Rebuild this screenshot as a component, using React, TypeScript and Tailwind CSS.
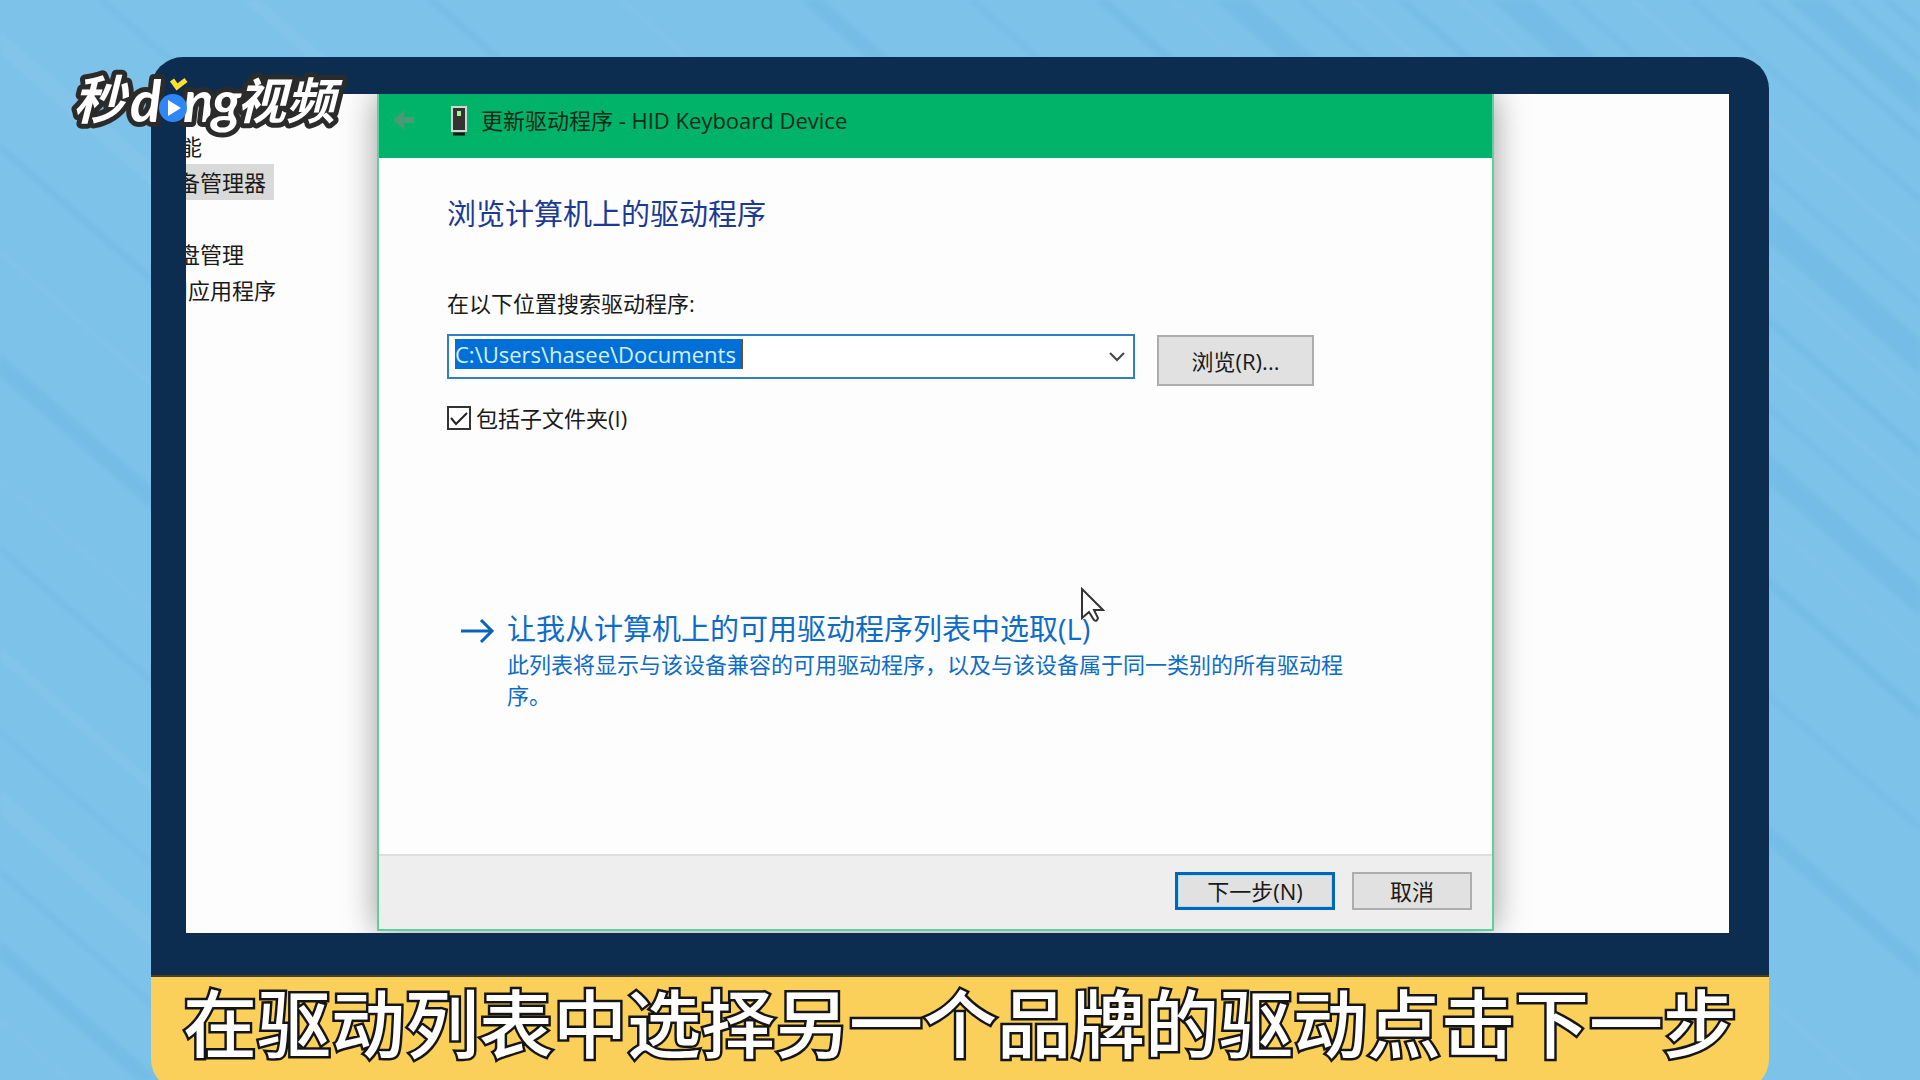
import { useState } from "react";

const UI_FONT = "font-['Open_Sans','Noto_Sans_CJK_SC',sans-serif]";

const BUTTON = "border-2 border-[#adadad] bg-[#e1e1e1] text-[22px] leading-none text-[#1a1a1a]";

const TREE_ITEMS = [
  { label: "性能", shift: "-ml-7", selected: false },
  { label: "设备管理器", shift: "-ml-[30px]", selected: true },
  { label: "", shift: "", selected: false },
  { label: "磁盘管理", shift: "-ml-[30px]", selected: false },
  { label: "和应用程序", shift: "-ml-5", selected: false },
];

// Faint brush streaks in the wallpaper: offset along the top edge, width, colour.
const STREAKS = [
  [-1180, 3, "#fff"], [-1100, 14, "#1a78b0"], [-1010, 4, "#1a78b0"], [-930, 20, "#fff"],
  [-850, 3, "#1a78b0"], [-760, 10, "#fff"], [-640, 4, "#1a78b0"], [-560, 3, "#fff"],
  [-430, 16, "#1a78b0"], [-300, 4, "#fff"], [-180, 5, "#1a78b0"], [-60, 18, "#fff"],
  [90, 4, "#1a78b0"], [240, 12, "#fff"], [420, 5, "#1a78b0"], [610, 4, "#fff"],
  [800, 14, "#1a78b0"], [960, 4, "#1a78b0"], [1090, 8, "#1a78b0"], [1160, 3, "#fff"],
  [1220, 22, "#1a78b0"], [1290, 4, "#1a78b0"], [1340, 5, "#fff"], [1390, 6, "#1a78b0"],
  [1450, 4, "#fff"], [1500, 26, "#1a78b0"], [1560, 4, "#1a78b0"], [1620, 5, "#fff"],
  [1680, 4, "#1a78b0"], [1750, 5, "#1a78b0"], [1795, 24, "#1a78b0"], [1840, 4, "#1a78b0"],
  [1875, 5, "#1a78b0"],
] as const;

function Wallpaper() {
  return (
    <svg
      className="absolute inset-0 h-full w-full blur-[2px]"
      viewBox="0 0 1920 1080"
      preserveAspectRatio="xMidYMid slice"
      aria-hidden="true"
    >
      {STREAKS.map(([x, width, color]) => (
        <path key={x} d={`M${x} -10l1260 1100`} stroke={color} strokeWidth={width} opacity="0.06" />
      ))}
    </svg>
  );
}

function Logo() {
  const glyph = {
    fill: "#fff",
    stroke: "#2b2b2b",
    strokeWidth: 10,
    strokeLinejoin: "round" as const,
    paintOrder: "stroke",
  };
  return (
    <svg
      className="absolute top-[-2px] left-[-88px] h-[90px] w-[300px] font-['Noto_Sans_CJK_SC',sans-serif] font-bold italic"
      viewBox="0 0 300 90"
      role="img"
      aria-label="秒dǒng视频"
    >
      <text x="10" y="64" fontSize="52" {...glyph}>秒</text>
      <text x="174" y="64" fontSize="49" {...glyph}>视频</text>
      <g className="font-['Lato',sans-serif]">
        <text x="67" y="67" fontSize="58" {...glyph}>d</text>
        <text x="120" y="67" fontSize="58" {...glyph}>n</text>
        <text x="149" y="67" fontSize="58" {...glyph}>g</text>
      </g>
      <circle cx="110" cy="53" r="14" fill="#2f86f6" />
      <path d="M105 45v16l13-8z" fill="#fff" />
      <path d="M109 25l5 7 9-7" fill="none" stroke="#ffe02e" strokeWidth="5" />
    </svg>
  );
}

function Sidebar() {
  return (
    <ul className="w-[191px] shrink-0 overflow-hidden pt-[34px] text-[22px] leading-9 text-[#1a1a1a]">
      {TREE_ITEMS.map((item, i) => (
        <li key={i} className="h-9 whitespace-nowrap">
          <span className={`inline-block pr-2 ${item.shift} ${item.selected ? "bg-[#d9d9d9]" : ""}`}>
            {item.label}
          </span>
        </li>
      ))}
    </ul>
  );
}

function TitleBar() {
  return (
    <header className="flex h-16 items-start bg-[#00b368] pt-2 pl-3">
      <button type="button" aria-label="返回" className="flex h-9 w-6 items-center text-[#4a9a75]">
        <svg viewBox="0 0 24 24" className="h-6 w-6">
          <path d="M2 12L13 2v7h10v6H13v7z" fill="currentColor" />
        </svg>
      </button>
      <svg viewBox="0 0 16 30" className="mt-1 ml-9 h-[30px] w-4">
        <rect x="1" y="1" width="14" height="24" fill="#333" stroke="#d0d6d2" strokeWidth="2" />
        <rect x="6" y="5" width="4" height="5" fill="#a8f090" />
        <path d="M2 28h12" stroke="#111" strokeWidth="3" />
      </svg>
      <h1 className="ml-[14px] text-[22px] leading-9 text-[#0c2b1a]">更新驱动程序 - HID Keyboard Device</h1>
    </header>
  );
}

function DriverDialog() {
  const [path, setPath] = useState("C:\\Users\\hasee\\Documents");
  const [subfolders, setSubfolders] = useState(true);

  return (
    <section className="relative mb-[2px] flex flex-1 flex-col border-x-2 border-b-2 border-[#5fcf9f] bg-[#fdfdfd] shadow-[0_0_32px_rgba(0,0,0,0.4)]">
      <TitleBar />
      <div className="flex-1 pr-[140px] pl-[68px]">
        <h2 className="pt-9 text-[29px] leading-10 text-[#1c3a94]">浏览计算机上的驱动程序</h2>

        <label htmlFor="path" className="mt-[53px] block text-[22px] leading-8 text-[#1a1a1a]">
          在以下位置搜索驱动程序:
        </label>
        <div className="mt-[15px] mr-[38px] flex items-start gap-[22px]">
          <div className="relative flex h-[45px] flex-1 items-start border-2 border-[#2f7fc1] bg-white pt-[3px] pl-[6px]">
            <input
              id="path"
              value={path}
              onChange={(e) => setPath(e.target.value)}
              className="h-[30px] w-[288px] border-r-2 border-[#7a4a20] bg-[#0070d8] text-[22px] leading-[30px] text-[#d5f0ff] outline-none"
            />
            <button
              type="button"
              aria-label="展开"
              className="absolute top-0 right-0 flex h-full w-8 items-center justify-center"
            >
              <svg viewBox="0 0 16 10" className="h-[10px] w-4" fill="none" stroke="#444" strokeWidth="2">
                <path d="M1 1l7 7 7-7" />
              </svg>
            </button>
          </div>
          <button type="button" className={`mt-[1px] h-[51px] w-[157px] ${BUTTON}`}>
            浏览(R)...
          </button>
        </div>

        <label className="mt-4 flex items-center gap-[5px] text-[22px] leading-8 text-[#1a1a1a]">
          <span className="relative flex h-6 w-6">
            <input
              type="checkbox"
              checked={subfolders}
              onChange={(e) => setSubfolders(e.target.checked)}
              className="h-6 w-6 appearance-none border-2 border-[#333] bg-white"
            />
            {subfolders && (
              <svg
                viewBox="0 0 24 24"
                className="pointer-events-none absolute inset-0"
                fill="none"
                stroke="#222"
                strokeWidth="2"
              >
                <path d="M4 12l5 6L20 7" />
              </svg>
            )}
          </span>
          包括子文件夹(I)
        </label>

        <button type="button" className="mt-[175px] ml-[14px] flex items-start text-left text-[#0f6cc6]">
          <svg
            viewBox="0 0 34 24"
            className="mt-[10px] mr-3 h-6 w-[34px] shrink-0"
            fill="none"
            stroke="#0a64bd"
            strokeWidth="3"
          >
            <path d="M0 12h31M20 1l11 11-11 11" />
          </svg>
          <span>
            <span className="block text-[29px] leading-10">让我从计算机上的可用驱动程序列表中选取(L)</span>
            <span className="block text-[22px] leading-[31px]">
              此列表将显示与该设备兼容的可用驱动程序，以及与该设备属于同一类别的所有驱动程序。
            </span>
          </span>
        </button>
      </div>

      <footer className="flex h-[75px] items-start justify-end gap-[17px] border-t-2 border-[#dedede] bg-[#eeeeee] pt-4 pr-5">
        <button
          type="button"
          className="h-[38px] w-[160px] border-[3px] border-[#0067b8] bg-[#e1e1e1] text-[22px] leading-none text-[#1a1a1a] outline-1 -outline-offset-4 outline-[#a5e0ff]"
        >
          下一步(N)
        </button>
        <button type="button" className={`h-[38px] w-[120px] ${BUTTON}`}>
          取消
        </button>
      </footer>

      <svg
        viewBox="0 0 24 36"
        className="absolute top-[493px] left-[702px] h-9 w-6"
        fill="#fff"
        stroke="#333"
        strokeWidth="2"
      >
        <path d="M1 2v29l7-6 5 8q3 2 4-2l-4-8h9z" />
      </svg>
    </section>
  );
}

export default function App() {
  return (
    <main className={`relative h-screen overflow-hidden bg-[#7cc2e9] pt-[57px] pr-[151px] pl-[151px] ${UI_FONT}`}>
      <Wallpaper />
      <div className="relative flex h-[918px] flex-col rounded-t-[32px] bg-[#0c2d50] pt-[37px] pr-10 pb-[42px] pl-[35px]">
        <div className="flex flex-1 overflow-hidden bg-[#fdfdfd]">
          <Sidebar />
          <DriverDialog />
          <div className="w-[235px] shrink-0" />
        </div>
        <Logo />
      </div>
      <div className="relative flex h-[116px] justify-center overflow-hidden rounded-b-[32px] border-t-2 border-[#4a4020] bg-[#fad05a]">
        <p className="text-[74px] leading-[94px] font-medium whitespace-nowrap text-white [-webkit-text-stroke:5px_#151515] [paint-order:stroke]">
          在驱动列表中选择另一个品牌的驱动点击下一步
        </p>
      </div>
    </main>
  );
}
